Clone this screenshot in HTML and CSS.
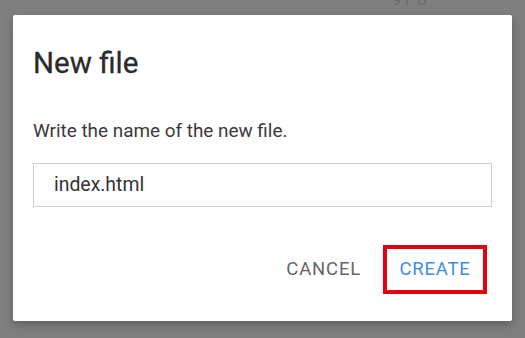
FILE: index.html
```html
<!DOCTYPE html>
<html>
<head>
<meta charset="utf-8">
<link rel="stylesheet" href="styles.css">
</head>
<body>
<div class="backdrop-text">91 B</div>
<div class="dialog">
  <h1 class="title">New file</h1>
  <p class="message">Write the name of the new file.</p>
  <div class="field"><span class="field-value">index.html</span></div>
  <div class="actions">
    <button class="btn btn-cancel">CANCEL</button>
    <button class="btn btn-create">CREATE</button>
  </div>
</div>
</body>
</html>
```
FILE: styles.css
```css
html, body {
  margin: 0;
  padding: 0;
}
body {
  background: #7f7f7f;
  width: 525px;
  height: 338px;
  overflow: hidden;
  position: relative;
  font-family: Roboto, "Liberation Sans", sans-serif;
  padding-top: 15px;
  box-sizing: border-box;
}
.backdrop-text {
  position: absolute;
  left: 392px;
  top: -8px;
  font-size: 16px;
  line-height: 16px;
  color: #6a6a6a;
  letter-spacing: 1px;
}
.dialog {
  margin-left: 13px;
  width: 499px;
  box-sizing: border-box;
  background: #fff;
  border-radius: 2px;
  padding: 34px 20px 27px 20px;
  box-shadow: 0 4px 10px rgba(0,0,0,0.25);
}
.title {
  margin: 0;
  font-size: 29.5px;
  line-height: 29px;
  font-weight: 400;
  color: #2b2b2b;
  height: 29px;
  -webkit-text-stroke: 0.3px #2b2b2b;
}
.message {
  margin: 43.5px 0 0 0;
  font-size: 18.9px;
  line-height: 18.5px;
  color: #3a3a3a;
}
.field {
  margin-top: 23px;
  height: 44px;
  box-sizing: border-box;
  border: 1px solid #cfcfcf;
  display: flex;
  align-items: center;
  padding: 0 20px;
}
.field-value {
  font-size: 19.4px;
  line-height: 19.6px;
  color: #333;
}
.actions {
  margin-top: 38px;
  display: flex;
  justify-content: flex-end;
  align-items: center;
  gap: 22px;
  padding-right: 5px;
}
.btn {
  font-family: Roboto, "Liberation Sans", sans-serif;
  font-size: 18.5px;
  line-height: 18.5px;
  letter-spacing: 0.8px;
  background: transparent;
  border: none;
  padding: 0;
  margin: 0;
  cursor: pointer;
}
.btn-cancel {
  color: #666;
}
.btn-create {
  color: #3d8fdb;
  width: 104px;
  height: 49px;
  box-sizing: border-box;
  border: 4px solid #e3000f;
  display: flex;
  align-items: center;
  justify-content: center;
}
```
